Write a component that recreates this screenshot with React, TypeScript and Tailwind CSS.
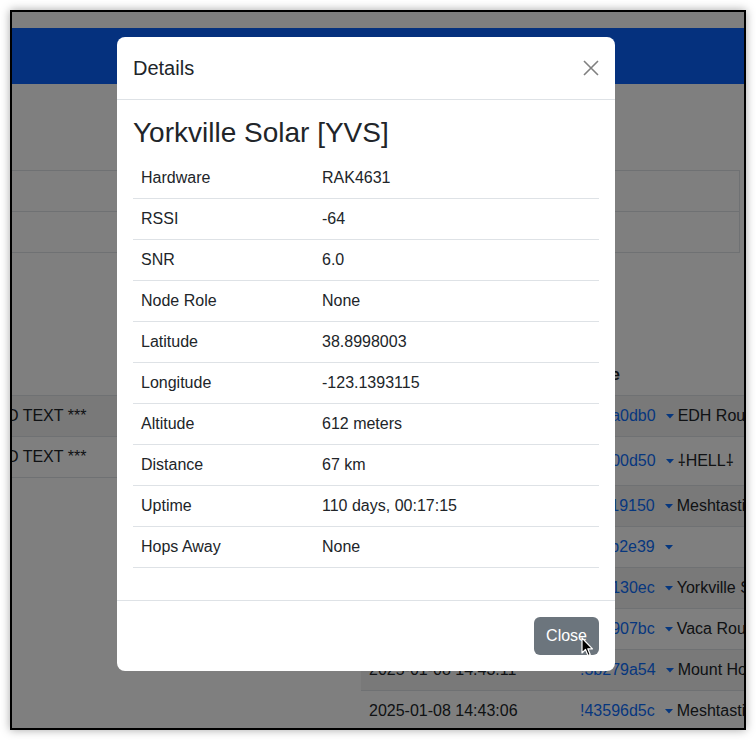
import React from "react";

const details = [
  ["Hardware", "RAK4631"],
  ["RSSI", "-64"],
  ["SNR", "6.0"],
  ["Node Role", "None"],
  ["Latitude", "38.8998003"],
  ["Longitude", "-123.1393115"],
  ["Altitude", "612 meters"],
  ["Distance", "67 km"],
  ["Uptime", "110 days, 00:17:15"],
  ["Hops Away", "None"],
];

const packets = [
  { time: "2025-01-08 14:44:02", id: "!da2a0db0", name: "EDH Router", tall: false },
  { time: "2025-01-08 14:43:58", id: "!4e100d50", name: "⸸HELL⸸", tall: true },
  { time: "2025-01-08 14:43:51", id: "!a4c19150", name: "Meshtastic 9150", tall: false },
  { time: "2025-01-08 14:43:40", id: "!67cb2e39", name: "", tall: false },
  { time: "2025-01-08 14:43:29", id: "!3a2130ec", name: "Yorkville Solar", tall: false },
  { time: "2025-01-08 14:43:17", id: "!2b6907bc", name: "Vaca Router", tall: false },
  { time: "2025-01-08 14:43:11", id: "!3b279a54", name: "Mount Hood", tall: false },
  { time: "2025-01-08 14:43:06", id: "!43596d5c", name: "Meshtastic d5c", tall: false },
];

const Caret = () => (
  <svg width="8" height="5" viewBox="0 0 8 5" className="ml-[10px] inline-block shrink-0">
    <path d="M0 0 L8 0 L4 4.5 Z" fill="#0d6efd" />
  </svg>
);

const App = () => {
  return (
    <div className="w-[756px] h-[740px] bg-white pt-[10px] pl-[10px] font-['Liberation_Sans',Arial,sans-serif] text-[#212529]">
      <div className="relative w-[736px] h-[720px] overflow-hidden border-2 border-black shadow-[0_0_9px_rgba(0,0,0,0.35)]">
        {/* page behind the dialog (scrolled sideways) */}
        <div className="-ml-[135px] w-[875px] text-base">
          <div className="h-4 bg-white" />
          <div className="h-14 bg-[#0b63fc]" />
          <div className="px-3 pt-[86px] bg-white h-[700px]">
            <table className="w-full border border-[#dee2e6]">
              <tbody>
                <tr className="h-[41px]">
                  <td className="border border-[#dee2e6] w-[471px]"></td>
                  <td className="border border-[#dee2e6]"></td>
                </tr>
                <tr className="h-[41px]">
                  <td className="border border-[#dee2e6]"></td>
                  <td className="border border-[#dee2e6]"></td>
                </tr>
              </tbody>
            </table>

            <div className="mt-[102px] flex gap-6">
              <div className="w-[448px] shrink-0">
                <table className="w-full">
                  <thead>
                    <tr className="border-b border-[#dee2e6]">
                      <th className="px-2 py-2 text-left leading-6">Message</th>
                    </tr>
                  </thead>
                  <tbody>
                    <tr className="border-b border-[#dee2e6] bg-black/5">
                      <td className="px-2 py-2 leading-6 whitespace-nowrap">*** ENCRYPTED TEXT ***</td>
                    </tr>
                    <tr className="border-b border-[#dee2e6]">
                      <td className="px-2 py-2 leading-6 whitespace-nowrap">*** ENCRYPTED TEXT ***</td>
                    </tr>
                  </tbody>
                </table>
              </div>

              <div className="min-w-0 flex-1">
                <table className="w-[560px]">
                  <thead>
                    <tr className="border-b border-[#dee2e6]">
                      <th className="w-[211px] px-2 py-2 text-left leading-6">Time</th>
                      <th className="px-2 py-2 text-left leading-6">Node</th>
                    </tr>
                  </thead>
                  <tbody>
                    {packets.map((p, i) => (
                      <tr
                        key={p.id}
                        className={`border-b border-[#dee2e6] ${p.tall ? "h-[49px]" : "h-[41px]"} ${i % 2 === 0 ? "bg-black/5" : ""}`}
                      >
                        <td className="px-2 py-0 leading-6 whitespace-nowrap">{p.time}</td>
                        <td className="px-2 py-0 leading-6 whitespace-nowrap">
                          <span className="inline-flex items-center">
                            <a className="text-[#0d6efd]">{p.id}</a>
                            <Caret />
                            <span className="ml-1">{p.name}</span>
                          </span>
                        </td>
                      </tr>
                    ))}
                  </tbody>
                </table>
              </div>
            </div>
          </div>
        </div>

        {/* backdrop */}
        <div className="absolute inset-0 bg-[rgba(0,0,0,0.5)]" />

        {/* dialog */}
        <div className="absolute left-[105px] top-[25px] w-[498px] rounded-lg bg-white">
          <div className="flex items-center justify-between border-b border-[#dee2e6] p-4">
            <h5 className="text-[20px] leading-[30px] font-medium">Details</h5>
            <svg width="16" height="16" viewBox="0 0 16 16">
              <path d="M1 1 L15 15 M15 1 L1 15" stroke="#808080" strokeWidth="1.6" />
            </svg>
          </div>
          <div className="p-4">
            <h3 className="mb-2 text-[28px] leading-[1.2] font-medium">Yorkville Solar [YVS]</h3>
            <table className="mb-4 w-full">
              <tbody>
                {details.map(([k, v]) => (
                  <tr key={k} className="border-b border-[#dee2e6]">
                    <td className="w-[181px] px-2 py-2 leading-6">{k}</td>
                    <td className="px-2 py-2 leading-6">{v}</td>
                  </tr>
                ))}
              </tbody>
            </table>
          </div>
          <div className="flex justify-end border-t border-[#dee2e6] p-3">
            <button type="button" className="m-1 rounded-md bg-[#6c757d] px-3 py-[7px] leading-6 text-white">
              Close
            </button>
          </div>
        </div>

        {/* mouse pointer */}
        <svg width="13" height="20" viewBox="0 0 13 20" className="absolute left-[569px] top-[625px]">
          <path d="M1 1 L1 16 L4.5 12.5 L7 18.5 L9.2 17.6 L6.8 11.8 L11.5 11.8 Z" fill="#000" stroke="#fff" strokeWidth="1.2" strokeLinejoin="round" />
        </svg>
      </div>
    </div>
  );
};

export default App;
